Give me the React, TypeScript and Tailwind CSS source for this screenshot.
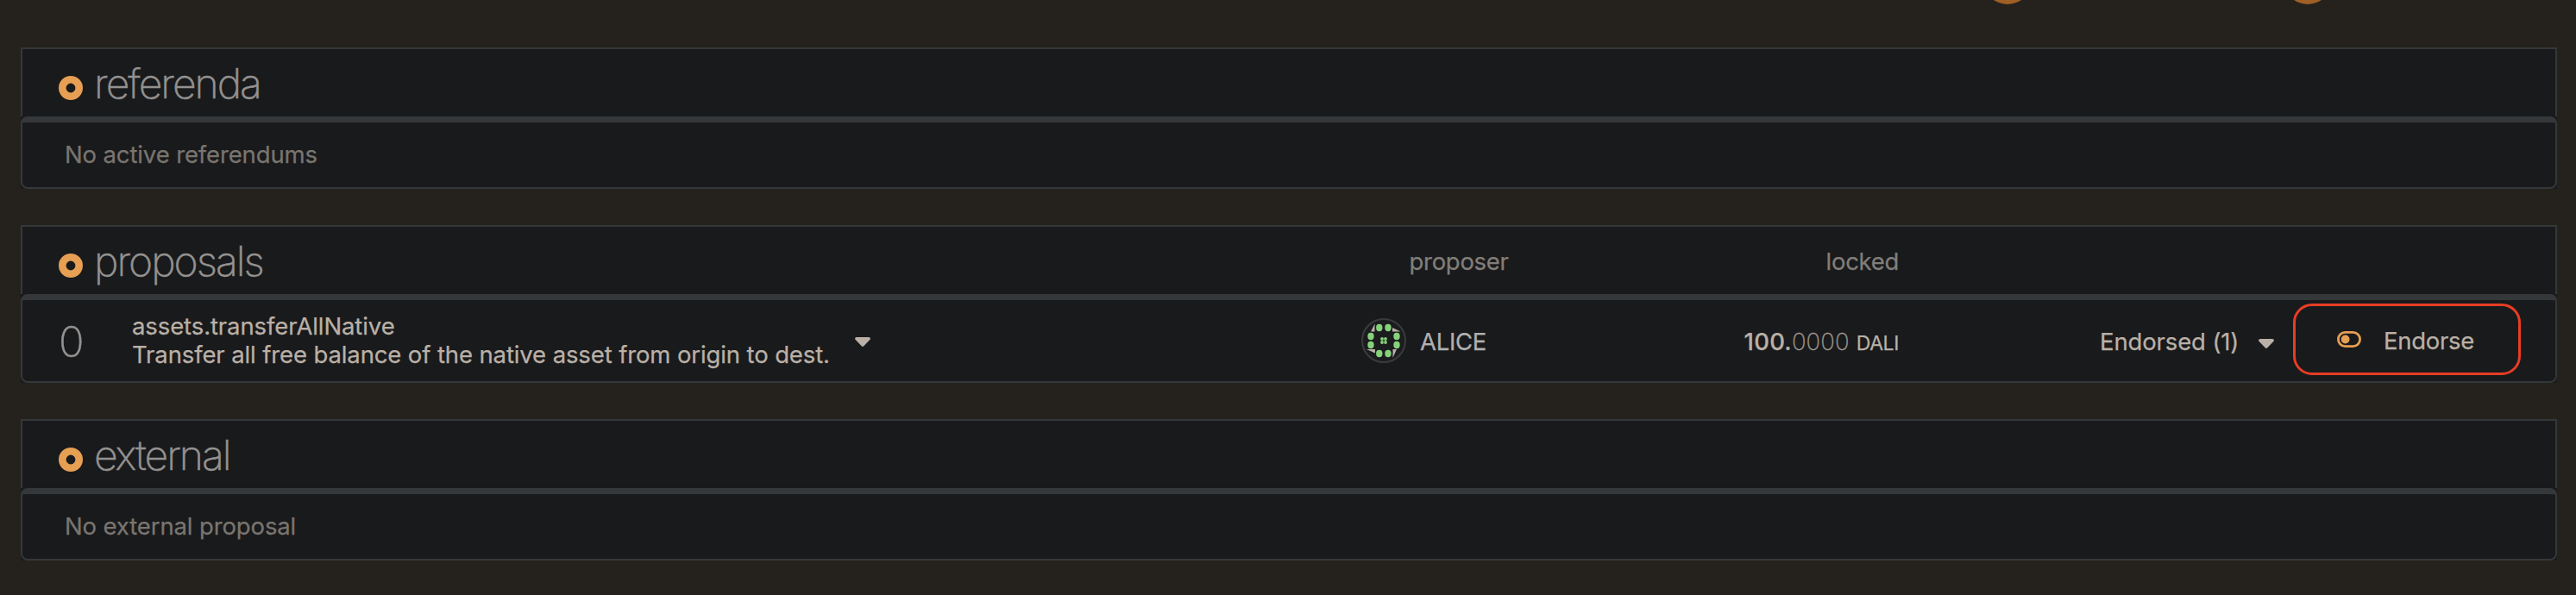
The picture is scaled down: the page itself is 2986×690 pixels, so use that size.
import React from "react";

const Ring = () => (
  <svg className="block h-7 w-7 shrink-0" viewBox="0 0 28 28">
    <circle cx="14" cy="14" r="9.7" fill="none" stroke="#e69f53" strokeWidth="8.6" />
  </svg>
);

const Caret = ({ className }: { className: string }) => (
  <svg className={"block h-[11px] w-[18px] shrink-0 " + className} viewBox="0 0 18 11">
    <path d="M2 0h14c1.7 0 2.5 1.8 1.3 3L10.300 10.300c-.7.8-1.900.8-2.600 0L.700 3C-.5 1.800.3 0 2 0z" fill="#bab0a6" />
  </svg>
);

const Identicon = () => (
  <svg className="block h-[52px] w-[52px] shrink-0" viewBox="-26 -26 52 52">
    <circle r="25" fill="#1b1c1e" stroke="#3a3b3e" strokeWidth="2" />
    <g fill="#bab0a6">
      <path d="M-10.500-19.500V-10.500H-15z" />
      <path d="M10-15l9.500 4.500H10z" />
      <path d="M-20 10h10v4.500z" />
      <path d="M10.500 10H15l-4.500 10z" />
    </g>
    <g fill="#86d27b">
      <ellipse cx="-5.200" cy="-15" rx="3.700" ry="4.200" />
      <ellipse cx="5" cy="-15" rx="3.700" ry="4.200" />
      <ellipse cx="-5.200" cy="15" rx="3.700" ry="4.200" />
      <ellipse cx="5" cy="15" rx="3.700" ry="4.200" />
      <ellipse cx="-15" cy="-5" rx="3.700" ry="4.200" />
      <ellipse cx="-15" cy="5" rx="3.700" ry="4.200" />
      <ellipse cx="15" cy="-5" rx="3.700" ry="4.200" />
      <ellipse cx="15" cy="5" rx="3.700" ry="4.200" />
      <circle cx="-2" cy="-2" r="1.900" />
      <circle cx="2" cy="-2" r="1.900" />
      <circle cx="-2" cy="2" r="1.900" />
      <circle cx="2" cy="2" r="1.900" />
    </g>
  </svg>
);

const Toggle = () => (
  <svg className="block h-[19px] w-7 shrink-0" viewBox="0 0 28 19">
    <rect x="1.400" y="1.400" width="25.200" height="16.200" rx="8.100" fill="none" stroke="#e69f53" strokeWidth="2.800" />
    <circle cx="9.600" cy="9.500" r="4.900" fill="#e69f53" />
  </svg>
);

const Panel = ({
  title,
  columns,
  children,
}: {
  title: string;
  columns?: React.ReactNode;
  children: React.ReactNode;
}) => (
  <section className="bg-[#191a1c]">
    <header className="flex h-20 items-start border-x-2 border-t-2 border-[#34383b] pl-[42px]">
      <div className="pt-[31px]">
        <Ring />
      </div>
      <h1 className="mt-[10px] ml-[13px] w-[1100px] text-[48px] leading-[60px] font-extralight tracking-[-2px] whitespace-nowrap text-[#949290] [-webkit-text-stroke:0.5px_#949290]">
        {title}
      </h1>
      {columns}
    </header>
    <div className="rounded-lg border-x-2 border-t-[7px] border-b-2 border-[#34383b]">{children}</div>
  </section>
);

export default function App() {
  return (
    <main className="relative flex h-[690px] w-[2986px] flex-col gap-[42px] overflow-hidden bg-[#25221d] pt-[55px] pr-[22px] pl-6 font-['Inter',sans-serif] text-[27.500px] font-normal tracking-[-0.13px] text-[#bab0a6] [-webkit-text-stroke:0.25px]">
      <div className="absolute -top-[51px] left-[2299px] h-14 w-14 rounded-full bg-[#a05f25]" />
      <div className="absolute -top-[51px] left-[2647px] h-14 w-14 rounded-full bg-[#a05f25]" />

      <Panel title="referenda">
        <p className="h-[75px] pl-[49px] leading-[75px] text-[#79756f]">No active referendums</p>
      </Panel>

      <Panel
        title="proposals"
        columns={
          <div className="ml-auto flex pr-[761px] leading-[80px] tracking-[-0.3px] text-[#827e78]">
            <span className="mr-[368px]">proposer</span>
            <span>locked</span>
          </div>
        }
      >
        <div className="flex h-[94px] items-center">
          <span className="w-[127px] pt-[3px] pl-[42px] text-[49px] leading-[91px] font-extralight text-[#949290] [-webkit-text-stroke:0.5px]">
            0
          </span>
          <div className="w-[838px] whitespace-nowrap">
            <p className="leading-[33px] tracking-[-0.1px]">assets.transferAllNative</p>
            <p className="leading-[33px] tracking-[-0.12px]">
              Transfer all free balance of the native asset from origin to dest.
            </p>
          </div>
          <Caret className="mt-[3px]" />
          <div className="ml-[569px] flex items-center gap-4 text-[#b0b0b0]">
            <Identicon />
            <span className="pt-[3px] tracking-[-0.3px]">ALICE</span>
          </div>
          <div className="ml-auto flex w-[200px] items-baseline justify-end pt-[3px] tracking-[0px] whitespace-nowrap">
            <span className="font-medium tracking-[0.2px]">100.</span>
            <span className="font-extralight tracking-[0.1px] text-[#9d958d]">0000</span>
            <span className="ml-2 text-[23px] tracking-[-0.4px]">DALI</span>
          </div>
          <span className="ml-[233px] w-[184px] pt-[3px] whitespace-nowrap">Endorsed (1)</span>
          <Caret className="mt-[7px]" />
          <div className="-mt-[3px] mr-10 ml-[22px] flex h-[83px] w-[264px] items-center rounded-[22px] border-3 border-[#e83d24] pl-12">
            <Toggle />
            <span className="ml-[26px] pt-1 tracking-[-0.3px]">Endorse</span>
          </div>
        </div>
      </Panel>

      <Panel title="external">
        <p className="h-[75px] pl-[49px] leading-[75px] text-[#79756f]">No external proposal</p>
      </Panel>
    </main>
  );
}
